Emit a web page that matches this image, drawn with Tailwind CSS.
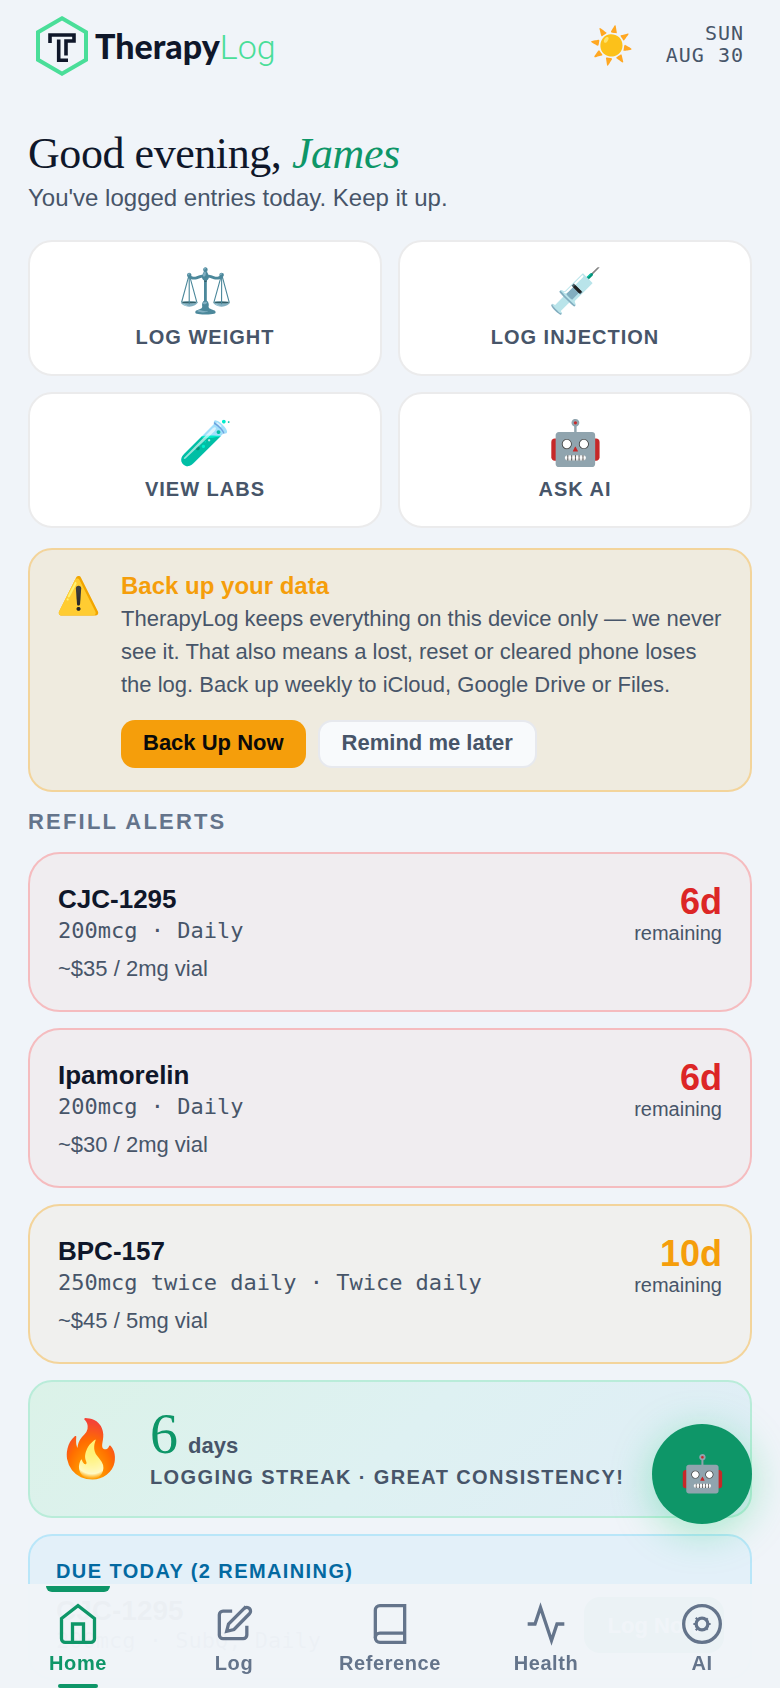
<!DOCTYPE html>
<html lang="en">
  <head>
    <meta charset="UTF-8" />
    <meta name="viewport" content="width=device-width, initial-scale=1.0" />
    <title>TherapyLog</title>
    <script src="https://cdn.jsdelivr.net/npm/@tailwindcss/browser@4"></script>
  </head>
  <body class="h-screen overflow-hidden bg-[#f0f4f9] font-['Liberation_Sans',Arial,sans-serif] text-[#475569]">
    <!-- Header -->
    <header class="flex h-23 items-center justify-between px-9">
      <a href="#home" aria-label="TherapyLog" class="flex items-center gap-[7px]">
        <svg class="h-15 w-13" viewBox="0 0 52 60" fill="none">
          <path d="M26 2.3 50 16.2v27.6L26 57.7 2 43.8V16.2z" stroke="#4ade99" stroke-width="4" />
          <path d="M14 27V19H38v6H30V39.5M22.7 23.5V44.2H32" stroke="#0f172a" stroke-width="3.6" />
        </svg>
        <span class="font-['Lato',sans-serif] text-[34px] leading-9 font-black text-[#0f172a]">Therapy<span class="font-['Roboto',sans-serif] font-light text-[#4ade99]">Log</span></span>
      </a>
      <div class="flex items-center gap-8">
        <span class="text-[36px] leading-10">☀️</span>
        <time class="pb-1 text-right font-['DejaVu_Sans_Mono',monospace] text-[20px] leading-[22px] tracking-[1px]">SUN<br />AUG 30</time>
      </div>
    </header>

    <main id="home" class="flex flex-col gap-4 px-7 pt-9">
      <!-- Greeting -->
      <section class="mb-2">
        <h1 class="font-['Liberation_Serif',serif] text-[44px] leading-[52px] tracking-[-0.01em] text-[#0f172a]">Good evening, <em class="text-[#0e9668]">James</em></h1>
        <p class="text-[24px] leading-9">You've logged entries today. Keep it up.</p>
      </section>

      <!-- Quick actions -->
      <section class="grid grid-cols-2 gap-4">
        <button class="flex h-34 flex-col items-center justify-center gap-2.5 rounded-3xl border-2 border-[#ebebec] bg-white">
          <span class="text-[44px] leading-12">⚖️</span>
          <span class="text-[20px] leading-6 font-bold tracking-[1px]">LOG WEIGHT</span>
        </button>
        <button class="flex h-34 flex-col items-center justify-center gap-2.5 rounded-3xl border-2 border-[#ebebec] bg-white">
          <span class="text-[44px] leading-12">💉</span>
          <span class="text-[20px] leading-6 font-bold tracking-[1px]">LOG INJECTION</span>
        </button>
        <button class="flex h-34 flex-col items-center justify-center gap-2.5 rounded-3xl border-2 border-[#ebebec] bg-white">
          <span class="text-[44px] leading-12">🧪</span>
          <span class="text-[20px] leading-6 font-bold tracking-[1px]">VIEW LABS</span>
        </button>
        <button class="flex h-34 flex-col items-center justify-center gap-2.5 rounded-3xl border-2 border-[#ebebec] bg-white">
          <span class="text-[44px] leading-12">🤖</span>
          <span class="text-[20px] leading-6 font-bold tracking-[1px]">ASK AI</span>
        </button>
      </section>

      <!-- Backup reminder -->
      <section class="mt-1 flex gap-5 rounded-3xl border-2 border-[#f3d49b] bg-[#efebdf] px-[26px] pt-[19px] pb-[22px]">
        <span class="text-[36px] leading-[54px]">⚠️</span>
        <div>
          <h2 class="text-[24px] leading-[33px] font-bold text-[#f59e0b]">Back up your data</h2>
          <p class="text-[22px] leading-[33px]">TherapyLog keeps everything on this device only — we never see it. That also means a lost, reset or cleared phone loses the log. Back up weekly to iCloud, Google Drive or Files.</p>
          <div class="mt-[19px] flex gap-3">
            <button class="h-12 rounded-[14px] bg-[#f59e0b] px-[22px] pb-1 text-[22px] font-bold text-[#0a0a0a]">Back Up Now</button>
            <button class="h-12 rounded-[14px] border-2 border-[#e7e9ee] bg-[#f8fafc] px-[22px] pb-1 text-[22px] font-bold">Remind me later</button>
          </div>
        </div>
      </section>

      <!-- Refill alerts -->
      <h2 class="text-[22px] leading-7 font-bold tracking-widest text-[#64748b]">REFILL ALERTS</h2>
      <article class="flex h-40 justify-between rounded-4xl border-2 border-[#f5bcbf] bg-[#f0edf0] px-7 pt-[30px]">
        <div>
          <h3 class="text-[26px] leading-[30px] font-bold text-[#0f172a]">CJC-1295</h3>
          <p class="font-['DejaVu_Sans_Mono',monospace] text-[22px] leading-[34px]">200mcg · Daily</p>
          <p class="mt-[7px] text-[22px] leading-7">~$35 / 2mg vial</p>
        </div>
        <div class="text-right">
          <p class="text-[36px] leading-9 font-bold text-[#dc2626]">6d</p>
          <p class="text-[20px] leading-[26px]">remaining</p>
        </div>
      </article>
      <article class="flex h-40 justify-between rounded-4xl border-2 border-[#f5bcbf] bg-[#f0edf0] px-7 pt-[30px]">
        <div>
          <h3 class="text-[26px] leading-[30px] font-bold text-[#0f172a]">Ipamorelin</h3>
          <p class="font-['DejaVu_Sans_Mono',monospace] text-[22px] leading-[34px]">200mcg · Daily</p>
          <p class="mt-[7px] text-[22px] leading-7">~$30 / 2mg vial</p>
        </div>
        <div class="text-right">
          <p class="text-[36px] leading-9 font-bold text-[#dc2626]">6d</p>
          <p class="text-[20px] leading-[26px]">remaining</p>
        </div>
      </article>
      <article class="flex h-40 justify-between rounded-4xl border-2 border-[#f3d49b] bg-[#f0f0ee] px-7 pt-[30px]">
        <div>
          <h3 class="text-[26px] leading-[30px] font-bold text-[#0f172a]">BPC-157</h3>
          <p class="font-['DejaVu_Sans_Mono',monospace] text-[22px] leading-[34px]">250mcg twice daily · Twice daily</p>
          <p class="mt-[7px] text-[22px] leading-7">~$45 / 5mg vial</p>
        </div>
        <div class="text-right">
          <p class="text-[36px] leading-9 font-bold text-[#f59e0b]">10d</p>
          <p class="text-[20px] leading-[26px]">remaining</p>
        </div>
      </article>

      <!-- Streak -->
      <section class="flex h-[138px] items-center gap-6 rounded-3xl border-2 border-[#b9ecd9] bg-linear-135 from-[#dbf2e8] via-[#def1f2] to-[#e0edf7] px-[26px]">
        <span class="text-[56px] leading-16">🔥</span>
        <div>
          <p class="flex items-baseline gap-2.5 text-[22px] font-bold"><span class="font-['Liberation_Serif',serif] text-[56px] leading-[54px] font-normal text-[#0e9668]">6</span> days</p>
          <p class="text-[20px] leading-[30px] font-bold tracking-[0.07em]">LOGGING STREAK · GREAT CONSISTENCY!</p>
        </div>
      </section>

      <!-- Due today -->
      <section class="rounded-3xl border-2 border-[#b9e6f9] bg-[#e3f0f9] px-[26px] py-[23px]">
        <h2 class="text-[20px] leading-6 font-bold tracking-[0.07em] text-[#0369a1]">DUE TODAY (2 REMAINING)</h2>
        <div class="mt-3 flex items-center justify-between">
          <div>
            <h3 class="text-[28px] leading-8 font-bold text-[#0f172a]">CJC-1295</h3>
            <p class="font-['DejaVu_Sans_Mono',monospace] text-[22px] leading-7">200mcg · SubQ, Daily</p>
          </div>
          <button class="h-14 w-35 rounded-2xl bg-[#0e9668] text-[22px] font-bold text-white">Log Now</button>
        </div>
      </section>
    </main>

    <!-- Assistant button -->
    <button aria-label="Ask AI" class="fixed right-7 bottom-41 size-25 rounded-full bg-[#0e9668] text-[36px] shadow-[0_8px_40px_rgba(16,210,110,0.35)]">🤖</button>

    <!-- Bottom navigation -->
    <nav class="fixed inset-x-0 bottom-0 grid h-26 grid-cols-5 bg-[#f0f4f8]/98 text-[20px] font-bold tracking-[0.03em] text-[#64748b]">
      <a href="#home" aria-current="page" class="relative flex flex-col items-center gap-1 pt-[18px] text-[#0e9668]">
        <span class="absolute top-0.5 h-1.5 w-16 rounded-b-md bg-[#0e9668]"></span>
        <svg class="size-11" viewBox="0 0 24 24" fill="none" stroke="currentColor" stroke-width="1.8"><path d="M3 9l9-7 9 7v11a2 2 0 01-2 2H5a2 2 0 01-2-2z" /><path d="M9 22V12h6v10" /></svg>
        <span class="leading-[26px]">Home</span>
        <span class="absolute bottom-0 h-1 w-10 rounded-sm bg-[#0e9668]"></span>
      </a>
      <a href="#log" class="flex flex-col items-center gap-1 pt-[18px]">
        <svg class="size-11" viewBox="0 0 24 24" fill="none" stroke="currentColor" stroke-width="1.8"><path d="M11 5H6a2 2 0 00-2 2v11a2 2 0 002 2h11a2 2 0 002-2v-5" /><path d="M17.586 3.586a2 2 0 112.828 2.828L12 15l-4 1 1-4 9.5-9.5z" /></svg>
        <span class="leading-[26px]">Log</span>
      </a>
      <a href="#reference" class="flex flex-col items-center gap-1 pt-[18px]">
        <svg class="size-11" viewBox="0 0 24 24" fill="none" stroke="currentColor" stroke-width="1.8"><path d="M4 19.5A2.5 2.5 0 016.5 17H20" /><path d="M6.5 2H20v20H6.5A2.5 2.5 0 014 19.5v-15A2.5 2.5 0 016.5 2z" /></svg>
        <span class="leading-[26px]">Reference</span>
      </a>
      <a href="#health" class="flex flex-col items-center gap-1 pt-[18px]">
        <svg class="size-11" viewBox="0 0 24 24" fill="none" stroke="currentColor" stroke-width="1.8"><path d="M22 12h-4l-3 9L9 3l-3 9H2" /></svg>
        <span class="leading-[26px]">Health</span>
      </a>
      <a href="#ai" class="flex flex-col items-center gap-1 pt-[18px]">
        <svg class="size-11" viewBox="0 0 24 24" fill="none" stroke="currentColor" stroke-width="1.8"><circle cx="12" cy="12" r="10" /><circle cx="12" cy="12" r="3.2" /><path d="M8.3 12h-1M16.7 12h-1M9.4 9.4l-.8-.8M9.4 14.600l-.8.8M14.600 9.400l.5-.5M14.600 14.600l.5.5" stroke-width="1.2" /></svg>
        <span class="leading-[26px]">AI</span>
      </a>
    </nav>
  </body>
</html>
